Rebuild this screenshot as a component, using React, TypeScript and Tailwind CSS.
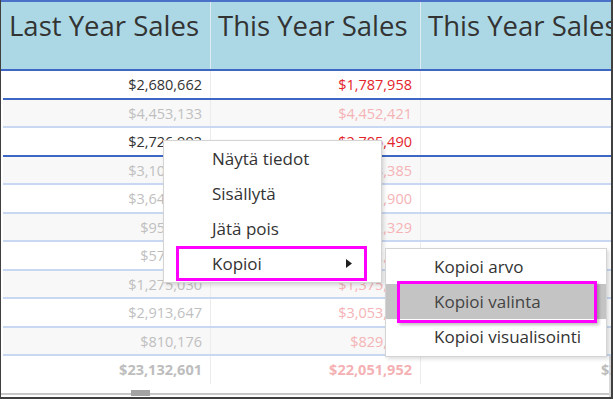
const ROWS = [
  { a: '$2,680,662', b: '$1,787,958', sel: true },
  { a: '$4,453,133', b: '$4,452,421', sel: false },
  { a: '$2,726,993', b: '$2,705,490', sel: true },
  { a: '$3,105,201', b: '$3,168,385', sel: false },
  { a: '$3,640,420', b: '$3,411,900', sel: false },
  { a: '$953,872', b: '$902,329', sel: false },
  { a: '$574,229', b: '$612,450', sel: false },
  { a: '$1,275,030', b: '$1,375,117', sel: false },
  { a: '$2,913,647', b: '$3,053,118', sel: false },
  { a: '$810,176', b: '$829,552', sel: false },
]

function Arrow() {
  return (
    <svg width="6" height="9" viewBox="0 0 6 9">
      <path d="M0 0 L6 4.5 L0 9 Z" fill="#1f1f1f" />
    </svg>
  )
}

export default function App() {
  return (
    <div className="relative w-[613px] h-[399px] overflow-hidden bg-white border-l border-r-2 border-b-2 border-[#404040] flex flex-col font-['Open_Sans','Noto_Sans',sans-serif]">
      {/* Header */}
      <div className="flex shrink-0 h-[71px] bg-[#acd8e5] border-t-2 border-b-2 border-t-[#4a72c8] border-b-[#3e67c4] text-[27.5px] leading-none text-[#333]">
        <div className="w-[210px] shrink-0 border-r border-[#dcecf2] pl-[8px] pt-[10px] whitespace-nowrap">Last Year Sales</div>
        <div className="w-[210px] shrink-0 border-r border-[#dcecf2] pl-[7px] pt-[10px] whitespace-nowrap">This Year Sales</div>
        <div className="flex-1 pl-[7px] pt-[10px] whitespace-nowrap">This Year Sales</div>
      </div>

      {/* Body */}
      <div className="pl-[2px] text-[14.5px]">
        {ROWS.map((r, i) => (
          <div
            key={i}
            className={`flex h-[28.5px] border-b-2 ${r.sel ? 'border-[#3e67c4]' : 'border-[#c9d8f2]'} ${i % 2 ? 'bg-[#f8f8f8]' : 'bg-white'}`}
          >
            <div className={`w-[208px] shrink-0 border-r border-[#ececec] flex items-center justify-end pr-[8px] pt-[2px] ${r.sel ? 'text-[#333]' : 'text-[#bfbfbf]'}`}>
              {r.a}
            </div>
            <div className={`w-[210px] shrink-0 border-r border-[#ececec] flex items-center justify-end pr-[8px] pt-[2px] ${r.sel ? 'text-[#e3242b]' : 'text-[#f5b3b6]'}`}>
              {r.b}
            </div>
            <div className="flex-1" />
          </div>
        ))}

        {/* Total */}
        <div className="flex h-[28px] font-bold border-r-2 border-[#d8d8d8]">
          <div className="w-[208px] shrink-0 border-r border-[#ececec] flex items-center justify-end pr-[8px] text-[#bdbdbd]">$23,132,601</div>
          <div className="w-[210px] shrink-0 border-r border-[#ececec] flex items-center justify-end pr-[8px] text-[#f4b1b4]">$22,051,952</div>
          <div className="w-[272px] shrink-0 flex items-center justify-end pr-[9px] text-[#bdbdbd]">$24,210,530</div>
        </div>
      </div>

      {/* Horizontal scrollbar */}
      <div className="flex items-start h-[13px] pt-[6px] border-r-2 border-[#d8d8d8]">
        <div className="w-[130px] h-[2px] mt-[3px] bg-[#c8c8c8]" />
        <div className="w-[19px] h-[6px] bg-[#a3a3a3]" />
        <div className="flex-1 h-[2px] mt-[3px] bg-[#c8c8c8]" />
      </div>

      {/* Context menu */}
      <div className="absolute left-[162px] top-[140px] w-[219px] h-[143px] bg-white border border-[#d4d4d4] shadow-[2px_2px_4px_rgba(0,0,0,0.14)] text-[17px] text-[#333]">
        <div className="h-[35px] flex items-center pl-[48px]">Näytä tiedot</div>
        <div className="h-[35px] flex items-center pl-[48px]">Sisällytä</div>
        <div className="h-[35px] flex items-center pl-[48px]">Jätä pois</div>
        <div className="ml-[12px] w-[191px] h-[35px] border-[3px] border-[#ff00ff] flex items-center justify-between pl-[33px] pr-[12px]">
          <span>Kopioi</span>
          <Arrow />
        </div>
      </div>

      {/* Submenu */}
      <div className="absolute left-[384px] top-[248px] w-[222px] h-[109px] bg-white border border-[#d4d4d4] shadow-[2px_2px_4px_rgba(0,0,0,0.14)] text-[17px] text-[#333]">
        <div className="h-[35px] flex items-center pl-[48px]">Kopioi arvo</div>
        <div className="relative h-[35px] flex items-center pl-[48px] bg-[#c4c4c4] text-[#444]">
          Kopioi valinta
          <div className="absolute left-[11px] right-[9px] -top-[3px] -bottom-[4px] border-[3px] border-[#ff00ff] shadow-[2px_2px_3px_rgba(0,0,0,0.25)]" />
        </div>
        <div className="h-[35px] flex items-center pl-[48px]">Kopioi visualisointi</div>
      </div>
    </div>
  )
}
